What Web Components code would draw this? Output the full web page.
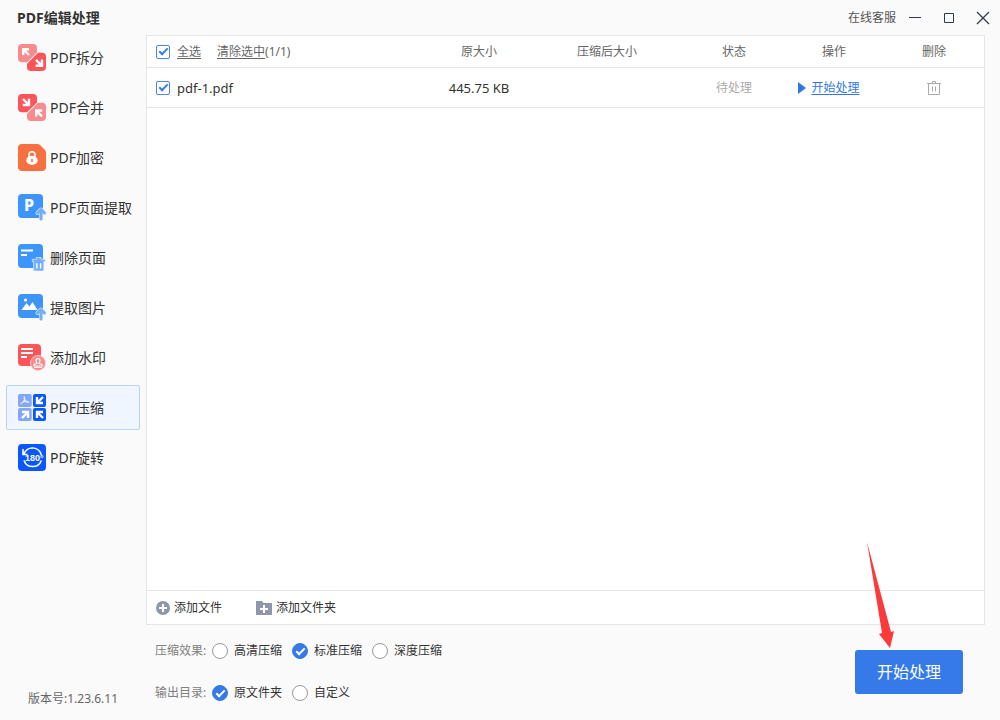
<!DOCTYPE html>
<html lang="zh-CN">
<head>
<meta charset="utf-8">
<title>PDF编辑处理</title>
<style>
html, body { margin: 0; height: 100%; }
body {
  font: 12px/20px "Noto Sans", "Noto Sans CJK SC", sans-serif;
  color: #333;
  background: #fafafa;
}
</style>
</head>
<body>
<pdf-app></pdf-app>

<template id="tpl-app">
<style>
:host {
  display: grid;
  grid-template-columns: 146px minmax(0, 1fr);
  grid-template-rows: 35px minmax(0, 1fr);
  min-height: 100vh;
  box-sizing: border-box;
}
title-bar { grid-column: 1 / -1; }
aside { display: flex; flex-direction: column; justify-content: space-between; }
nav { display: flex; flex-direction: column; gap: 5px; padding: 0 6px; }
.version { padding: 0 0 11px 28px; color: #666; }
main { display: flex; flex-direction: column; min-width: 0; }
file-panel { flex: 1; margin-right: 15px; }
footer { display: flex; justify-content: space-between; align-items: flex-start; height: 95px; padding: 0 37px 0 9px; box-sizing: border-box; }
.options { display: flex; flex-direction: column; gap: 22px; padding-top: 16px; }
start-action { margin-top: 25px; }
</style>
<title-bar>PDF编辑处理</title-bar>
<aside>
  <nav>
    <nav-item label="PDF拆分">
      <svg width="28" height="27" viewBox="0 0 28 27">
        <path fill="#f98a8d" d="M4 0h11a4 4 0 0 1 4 4v4.500L9 18.300H4a4 4 0 0 1-4-4V4a4 4 0 0 1 4-4z"/>
        <path fill="#fb5459" d="M24 27H13a4 4 0 0 1-4-4v-3.300L20 8.700h4a4 4 0 0 1 4 4V23a4 4 0 0 1-4 4z"/>
        <path fill="none" stroke="#fff" stroke-width="2.400" d="M5.200 11V5.200H11M5.500 5.500l5.500 5.500M24 15.500v6.300h-6.300M23.500 21.300L18 15.800"/>
      </svg>
    </nav-item>
    <nav-item label="PDF合并">
      <svg width="28" height="27" viewBox="0 0 28 27">
        <path fill="#fb5459" d="M4 0h11a4 4 0 0 1 4 4v4.500L9 18.300H4a4 4 0 0 1-4-4V4a4 4 0 0 1 4-4z"/>
        <path fill="#f98a8d" d="M24 27H13a4 4 0 0 1-4-4v-3.300L20 8.700h4a4 4 0 0 1 4 4V23a4 4 0 0 1-4 4z"/>
        <path fill="none" stroke="#fff" stroke-width="2.400" d="M11 4.800V11H4.800M10.500 10.500L5 5M18.200 22.500v-6h6M18.500 16.800l5.500 5.500"/>
      </svg>
    </nav-item>
    <nav-item label="PDF加密">
      <svg width="28" height="27" viewBox="0 0 28 27">
        <path fill="#f6713f" d="M4 0h15.500q1.500 0 2.500 1l5 5q1 1 1 2.500V23a4 4 0 0 1-4 4H4a4 4 0 0 1-4-4V4a4 4 0 0 1 4-4z"/>
        <path fill="none" stroke="#fff" stroke-width="1.600" d="M11 14v-3.200a3 3 0 0 1 6 0V14"/>
        <ellipse cx="14" cy="16.300" rx="5.700" ry="4.600" fill="#fff"/>
        <path stroke="#f6713f" stroke-width="1.600" stroke-linecap="round" d="M14 15.500v2"/>
      </svg>
    </nav-item>
    <nav-item label="PDF页面提取">
      <svg width="28" height="27" viewBox="0 0 28 27" overflow="visible">
        <rect width="25" height="24" rx="4" fill="#3d94fb"/>
        <text x="6" y="17" fill="#fff" font-family="Noto Sans, sans-serif" font-weight="800" font-size="16">P</text>
        <path fill="none" stroke="#d8e9ff" stroke-width="4" stroke-linecap="round" stroke-linejoin="round" d="M19.500 19l3.500-3.500 3.500 3.500M23 16v9"/>
        <path fill="none" stroke="#72aefa" stroke-width="2.800" stroke-linecap="round" stroke-linejoin="round" d="M19.500 19l3.500-3.500 3.500 3.500M23 16v9"/>
      </svg>
    </nav-item>
    <nav-item label="删除页面">
      <svg width="28" height="27" viewBox="0 0 28 27">
        <rect width="25" height="24" rx="4" fill="#3d94fb"/>
        <path stroke="#fff" stroke-width="2" d="M3 6.500h12M3 11h6"/>
        <path fill="#72aefa" stroke="#d8e9ff" stroke-width=".8" d="M14.300 15.300h4v-1.800h4.800v1.800h4v2.400h-1.300V26a1 1 0 0 1-1 1h-8.200a1 1 0 0 1-1-1v-8.300h-1.300z"/>
        <path stroke="#fff" stroke-width="1.400" d="M18.800 19.300v5.200M22.600 19.300v5.200"/>
      </svg>
    </nav-item>
    <nav-item label="提取图片">
      <svg width="28" height="27" viewBox="0 0 28 27" overflow="visible">
        <rect width="25" height="24" rx="4" fill="#3d94fb"/>
        <circle cx="7.500" cy="6" r="1.600" fill="#fff"/>
        <path fill="#fff" d="M3.500 16l5-7 3 3.500L14.500 8l5 8z"/>
        <path fill="none" stroke="#d8e9ff" stroke-width="4" stroke-linecap="round" stroke-linejoin="round" d="M19.500 19l3.500-3.500 3.500 3.500M23 16v9"/>
        <path fill="none" stroke="#72aefa" stroke-width="2.800" stroke-linecap="round" stroke-linejoin="round" d="M19.500 19l3.500-3.500 3.500 3.500M23 16v9"/>
      </svg>
    </nav-item>
    <nav-item label="添加水印">
      <svg width="28" height="27" viewBox="0 0 28 27">
        <rect width="23" height="22" rx="4" fill="#fb5459"/>
        <path stroke="#fff" stroke-width="2" d="M3 5h12M3 9h12M3 13h6"/>
        <circle cx="20" cy="19" r="7.600" fill="#f98a8d" stroke="#fddcdd" stroke-width=".8"/>
        <path fill="none" stroke="#fff" stroke-width="1.200" stroke-linejoin="round" d="M18.900 19.500c.3-1-.9-1.800-.9-2.900a2 2 0 0 1 4 0c0 1.100-1.200 1.900-.9 2.900l2.900.9v1.600h-8v-1.600zM16 23.500h8"/>
      </svg>
    </nav-item>
    <nav-item label="PDF压缩" current>
      <svg width="28" height="27" viewBox="0 0 28 27">
        <rect width="13.700" height="12.900" rx="2" fill="#84a6f8"/>
        <rect x="15" width="13" height="12.900" rx="2" fill="#0a57fb"/>
        <rect y="14.100" width="13.700" height="12.900" rx="2" fill="#84a6f8"/>
        <rect x="15" y="14.100" width="13" height="12.900" rx="2" fill="#0a57fb"/>
        <path fill="none" stroke="#dfe8ff" stroke-width="1.400" stroke-linecap="round" d="M6.200 2.800c1.500 2-.2 5-3.200 6.800M6.300 4c.3 2.800 2 4.300 4.500 4.200M4.300 8.500q2.200-1.400 5-1"/>
        <path fill="none" stroke="#fff" stroke-width="2.400" d="M19 3v6h6M19.500 8.500l5.500-5.500M4 18h6v6M9.500 18.500L4 24M19 24v-6h6M19.500 18.500l5.500 5.500"/>
      </svg>
    </nav-item>
    <nav-item label="PDF旋转">
      <svg width="28" height="27" viewBox="0 0 28 27">
        <rect width="28" height="27" rx="4" fill="#0a57fb"/>
        <path fill="none" stroke="#fff" stroke-width="1.600" d="M6 10a9 9 0 0 1 17.300 1M23.300 16.500a9.200 9.200 0 0 1-17.300 0M5 5v5.500h4.500"/>
        <text x="7" y="17" fill="#fff" font-family="Liberation Sans, sans-serif" font-weight="700" font-size="9">180°</text>
      </svg>
    </nav-item>
  </nav>
  <div class="version">版本号:1.23.6.11</div>
</aside>
<main>
  <file-panel></file-panel>
  <footer>
    <div class="options">
      <option-row label="压缩效果:" name="quality" options="高清压缩,标准压缩,深度压缩" selected="1"></option-row>
      <option-row label="输出目录:" name="output" options="原文件夹,自定义" selected="0"></option-row>
    </div>
    <start-action>开始处理</start-action>
  </footer>
</main>
</template>

<template id="tpl-title">
<style>
:host { display: flex; align-items: center; justify-content: space-between; padding-left: 17px; }
h1 { margin: 0; font-size: 14px; line-height: 20px; font-weight: 700; color: #333; }
.tools { display: flex; align-items: center; }
a { color: #555; text-decoration: none; margin-right: 2px; }
button { display: grid; place-items: center; width: 34px; height: 34px; padding: 0; border: 0; background: none; }
svg { display: block; fill: none; stroke: #333a48; }
</style>
<h1><slot></slot></h1>
<div class="tools">
  <a href="#service">在线客服</a>
  <button aria-label="最小化"><svg width="14" height="14" viewBox="0 0 14 14"><path d="M1 6.500h12"/></svg></button>
  <button aria-label="最大化"><svg width="14" height="14" viewBox="0 0 14 14"><path d="M2.500 2.500h9v9h-9z"/></svg></button>
  <button aria-label="关闭"><svg width="14" height="14" viewBox="0 0 14 14"><path stroke-width="1.300" d="M1 1l12 12M13 1L1 13"/></svg></button>
</div>
</template>

<template id="tpl-nav">
<style>
:host { display: block; }
a { display: flex; align-items: center; gap: 4px; height: 45px; padding-left: 11px; box-sizing: border-box; border: 1px solid transparent; border-radius: 2px; color: #333; font-size: 14px; text-decoration: none; white-space: nowrap; }
:host([current]) a { background: #f0f6ff; border-color: #b7d4f5; }
::slotted(svg) { display: block; flex: none; }
</style>
<a href="#"><slot></slot><span></span></a>
</template>

<template id="tpl-panel">
<style>
:host { display: flex; flex-direction: column; background: #fff; border: 1px solid #e6e6e6; box-sizing: border-box; }
.list { flex: 1; }
table { width: 100%; table-layout: fixed; border-collapse: separate; border-spacing: 0; }
th, td { box-sizing: border-box; padding: 0; border-bottom: 1px solid #e6e6e6; font-weight: 400; text-align: center; }
th { height: 32px; color: #666; }
td { height: 40px; color: #333; }
th:first-child, td:first-child { padding-left: 9px; text-align: left; }
.w-size { width: 102px; }
.w-packed { width: 154px; }
.w-std { width: 100px; }
.cell { display: flex; align-items: center; gap: 16px; }
label { display: flex; align-items: center; gap: 7px; }
u, a { text-decoration: underline; text-underline-offset: 2px; }
.cell a { color: #666; }
input { appearance: none; display: grid; place-items: center; width: 14px; height: 14px; margin: 0; box-sizing: border-box; border: 1px solid #4a86e8; border-radius: 2px; background: #fff; }
input:checked::before { content: ""; width: 9px; height: 5px; box-sizing: border-box; border: solid #3a7be8; border-width: 0 0 2px 2px; transform: translateY(-1px) rotate(-45deg); }
.latin { font-size: 13px; }
td.wait { color: #aaa; }
.run { display: flex; align-items: center; justify-content: center; gap: 5px; padding-right: 10px; color: #2f78e6; }
td button, .bar button { padding: 0; border: 0; background: none; font: inherit; color: inherit; }
td button { display: block; margin: 0 auto; }
td button svg { display: block; }
.bar { display: flex; align-items: center; gap: 34px; height: 34px; padding-left: 9px; box-sizing: border-box; border-top: 1px solid #e6e6e6; }
.bar button { display: flex; align-items: center; gap: 4px; }
</style>
<div class="list">
<table>
  <colgroup><col><col class="w-size"><col class="w-packed"><col class="w-std"><col class="w-std"><col class="w-std"></colgroup>
  <thead><tr>
    <th><div class="cell"><label><input type="checkbox" checked><u>全选</u></label><span><a href="#clear">清除选中</a>(1/1)</span></div></th>
    <th>原大小</th><th>压缩后大小</th><th>状态</th><th>操作</th><th>删除</th>
  </tr></thead>
  <tbody><tr>
    <td><label class="latin"><input type="checkbox" checked>pdf-1.pdf</label></td>
    <td class="latin">445.75 KB</td><td></td><td class="wait">待处理</td>
    <td><a class="run" href="#run"><svg width="8" height="12" viewBox="0 0 8 12"><path fill="#2f78e6" d="M0 0l8 6-8 6z"/></svg>开始处理</a></td>
    <td><button aria-label="删除"><svg width="16" height="16" viewBox="0 0 16 16" fill="none" stroke="#aaa"><path d="M1 3.500h14M2.500 3.500v11h11v-11M6.500 3V1.500h3V3M6.500 6.500v5M9.500 6.500v5"/></svg></button></td>
  </tr></tbody>
</table>
</div>
<div class="bar">
  <button><svg width="14" height="14" viewBox="0 0 14 14"><circle cx="7" cy="7" r="7" fill="#8f97aa"/><path stroke="#fff" stroke-width="2" d="M7 3v8M3 7h8"/></svg>添加文件</button>
  <button><svg width="16" height="14" viewBox="0 0 16 14"><path fill="#8f97aa" d="M0 0h6l1.500 2H16v12H0z"/><path stroke="#fff" stroke-width="2" d="M8 4v8M4 8h8"/></svg>添加文件夹</button>
</div>
</template>

<template id="tpl-options">
<style>
:host { display: flex; align-items: center; height: 20px; }
.name { width: 57px; color: #808080; white-space: nowrap; }
.set { display: flex; gap: 10px; }
label { display: flex; align-items: center; gap: 6px; color: #333; white-space: nowrap; }
input { appearance: none; display: grid; place-items: center; width: 16px; height: 16px; margin: 0; box-sizing: border-box; border: 1px solid #999; border-radius: 50%; background: #fff; }
input:checked { border-color: #367aea; background: #367aea; }
input:checked::before { content: ""; width: 9px; height: 5px; box-sizing: border-box; border: solid #fff; border-width: 0 0 2px 2px; transform: translateY(-1px) rotate(-45deg); }
</style>
<span class="name"></span><div class="set" role="radiogroup"></div>
</template>

<template id="tpl-start">
<style>
:host { display: block; position: relative; }
button { display: block; width: 108px; height: 44px; padding: 0; border: 0; border-radius: 3px; background: #367aea; color: #fff; font: inherit; font-size: 16px; }
svg { position: absolute; left: 10px; bottom: 45px; pointer-events: none; }
</style>
<button><slot></slot></button>
<svg width="32" height="108" viewBox="0 0 32 108"><path fill="#fb3a3c" d="M2 1L26 91l3-1L25 107 14 93l3-1z"/></svg>
</template>

<script>
const stamp = (el, id) => {
  const root = el.attachShadow({ mode: 'open' });
  root.append(document.getElementById(id).content.cloneNode(true));
  return root;
};
const define = (name, id, setup = () => {}) => customElements.define(name, class extends HTMLElement {
  connectedCallback() {
    if (!this.shadowRoot) setup(this, stamp(this, id));
  }
});

define('title-bar', 'tpl-title');
define('nav-item', 'tpl-nav', (el, root) => {
  root.querySelector('span').textContent = el.getAttribute('label');
  if (el.hasAttribute('current')) root.querySelector('a').setAttribute('aria-current', 'page');
});
define('file-panel', 'tpl-panel');
define('option-row', 'tpl-options', (el, root) => {
  const title = el.getAttribute('label');
  root.querySelector('.name').textContent = title;
  const set = root.querySelector('.set');
  set.setAttribute('aria-label', title);
  el.getAttribute('options').split(',').forEach((text, i) => {
    const label = document.createElement('label');
    const input = document.createElement('input');
    input.type = 'radio';
    input.name = el.getAttribute('name');
    input.checked = i === Number(el.getAttribute('selected'));
    label.append(input, text);
    set.append(label);
  });
});
define('start-action', 'tpl-start');
define('pdf-app', 'tpl-app');
</script>
</body>
</html>
